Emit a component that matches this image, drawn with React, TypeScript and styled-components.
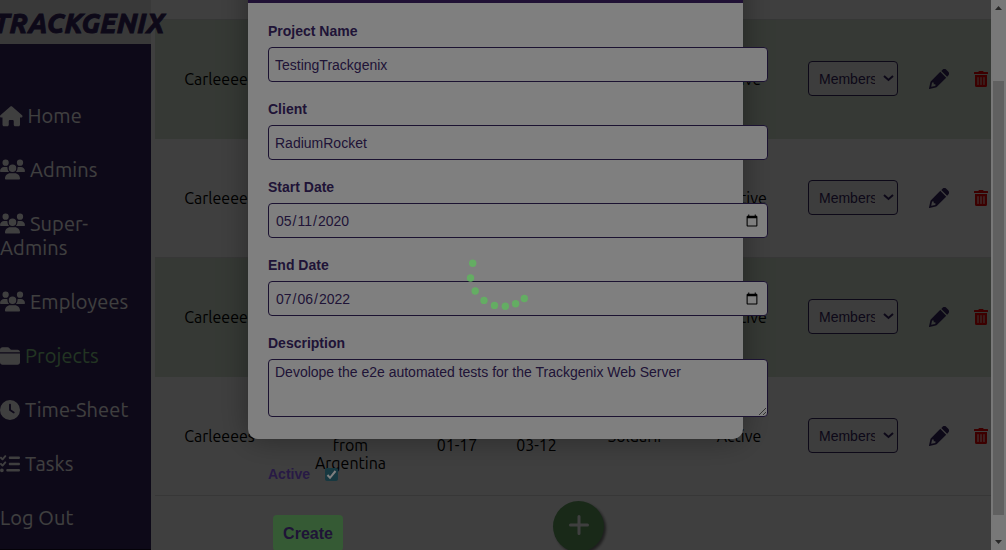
import React from 'react';
import styled, { createGlobalStyle } from 'styled-components';
import { FaTrashAlt } from 'react-icons/fa';
import { FaHouse, FaUsers, FaFolderClosed, FaClock, FaListCheck } from 'react-icons/fa6';

const Global = createGlobalStyle`
  * { box-sizing: border-box; }
  html, body { margin: 0; height: 550px; overflow: hidden; background: #fff; }
  body { font-family: Ubuntu, 'Noto Sans', sans-serif; }
`;

const Page = styled.div`
  position: relative;
  display: flex;
  width: 1006px;
  height: 550px;
  overflow: hidden;
`;
const Sidebar = styled.aside`
  width: 151px;
  height: 550px;
  flex: none;
  background: #372463;
  border-bottom: 1px solid #100820;
`;
const Brand = styled.div`
  height: 44px;
  background: #e4e4e6;
  color: #372463;
  font-size: 27.4px;
  font-weight: 800;
  font-style: italic;
  line-height: 45px;
  white-space: nowrap;
  text-indent: -7px;
  letter-spacing: -0.05px;
  -webkit-text-stroke: 0.8px #372463;
  position: relative;
  z-index: 1;
`;
const Nav = styled.nav`
  display: flex;
  flex-direction: column;
  gap: 30px;
  padding-top: 60px;
`;
const NavItem = styled.a<{ $active?: boolean }>`
  display: block;
  font-size: 20px;
  line-height: 24px;
  letter-spacing: 0.1px;
  color: ${(p) => (p.$active ? '#8bd58b' : '#fff')};
  svg {
    color: #fff;
    vertical-align: middle;
    margin: -7px 5px -3px 0;
  }
`;
const Main = styled.main`
  width: 840px;
  padding-left: 4px;
  height: 550px;
  overflow: hidden;
  background: #fff;
`;
const TableHead = styled.div`
  height: 20px;
  border-bottom: 1px solid #d8dcda;
`;
const Row = styled.div<{ $tinted?: boolean }>`
  display: grid;
  grid-template-columns: 129px 133px 80px 79px 117px 92px 114px 1fr 18px;
  align-items: center;
  height: 119px;
  border-bottom: 1px solid ${(p) => (p.$tinted ? '#d8e6d5' : '#dedede')};
  background: ${(p) => (p.$tinted ? '#d8e6d5' : '#fff')};
  color: #000;
  font-size: 16px;
  line-height: 18px;
  text-align: center;
`;
const Cell = styled.div`
  white-space: nowrap;
`;
const Members = styled.div`
  width: 90px;
  height: 35px;
  margin: 0 0 2px 23px;
  padding: 0 3px 0 10px;
  border: 1px solid #372463;
  border-radius: 4px;
  display: flex;
  align-items: center;
  justify-content: space-between;
  background: #f4f4f4;
  color: #372463;
  font: 14px 'Liberation Sans', sans-serif;
  span { width: 56px; padding-top: 1px; overflow: hidden; text-align: left; white-space: nowrap; }
`;
const IconCell = styled.div<{ $danger?: boolean }>`
  display: flex;
  justify-content: ${(p) => (p.$danger ? 'flex-start' : 'center')};
  padding-left: ${(p) => (p.$danger ? 0 : 6)}px;
  color: ${(p) => (p.$danger ? '#f00000' : '#372463')};
`;
const AddButton = styled.button`
  display: flex;
  align-items: center;
  justify-content: center;
  width: 51px;
  height: 51px;
  margin: 5px 0 0 398px;
  padding: 0 0 3px;
  border: 0;
  border-radius: 50%;
  background: #64a463;
  color: #fff;
  box-shadow: 2px 2px 3px #777;
`;
const ScrollBar = styled.div`
  position: relative;
  z-index: 3;
  width: 15px;
  height: 550px;
  display: flex;
  flex-direction: column;
  align-items: center;
  background: #f1f1f1;
`;
const ScrollArrow = styled.svg`
  flex: none;
  width: 15px;
  height: 15px;
`;
const Thumb = styled.div`
  width: 11px;
  height: 434px;
  margin-top: 66px;
  margin-bottom: auto;
  background: #c1c1c1;
`;
const Shade = styled.div<{ $level: number }>`
  position: absolute;
  inset: 0;
  z-index: ${(p) => p.$level};
  background: rgba(0, 0, 0, 0.5);
`;
const Modal = styled.section`
  position: absolute;
  z-index: 3;
  left: 248px;
  top: -60px;
  width: 495px;
  height: 499px;
  background: #fff;
  border-radius: 10px;
  box-shadow: 0 0 30px rgba(0, 0, 0, 0.35);
  font-family: 'Liberation Sans', sans-serif;
  color: #3f296e;
`;
const ModalBar = styled.div`
  height: 63px;
  background: #40226a;
  border-radius: 10px 10px 0 0;
`;
const Form = styled.form`
  padding: 20px 20px 0;
`;
const Field = styled.div`
  height: 78px;
`;
const Label = styled.label`
  display: block;
  height: 24px;
  font-size: 14px;
  line-height: 17px;
  font-weight: 700;
`;
const Input = styled.input`
  display: block;
  width: 500px;
  height: 35px;
  margin: 0;
  padding: 1px 6px 0;
  border: 1px solid #372463;
  border-radius: 4px;
  outline: 0;
  background: #fff;
  color: #3f296e;
  font: 14px 'Liberation Sans', sans-serif;
`;
const TextArea = styled.textarea`
  display: block;
  width: 500px;
  height: 58px;
  margin: 0;
  padding: 4px 6px;
  border: 1px solid #372463;
  border-radius: 4px;
  outline: 0;
  background: #fff;
  color: #3f296e;
  font: 14px/16px 'Liberation Sans', sans-serif;
`;
const ActiveRow = styled.div`
  display: flex;
  align-items: center;
  height: 20px;
  margin-top: 51px;
  font-size: 14px;
  font-weight: 700;
  color: #50358a;
  svg { margin-left: 15px; }
`;
const CreateButton = styled.button`
  display: block;
  width: 70px;
  height: 36px;
  margin: 31px 0 0 5px;
  padding: 2px 0 0;
  border: 0;
  border-radius: 4px;
  background: #6ab568;
  color: #3f296e;
  font: 700 16px 'Liberation Sans', sans-serif;
`;
const Spinner = styled.svg`
  position: absolute;
  z-index: 5;
  left: 460px;
  top: 250px;
`;

const Pencil = () => (
  <svg width="20" height="20" viewBox="0 0 20 20" fill="currentColor">
    <path d="M12.300 1.900l1-1a3 3 0 0 1 4.200 0l1.600 1.600a3 3 0 0 1 0 4.200l-1 1z" />
    <path fillRule="evenodd" d="M11.300 2.800l5.900 5.900-9.100 9.100a3 3 0 0 1-1.300.8L.5 20a.5.5 0 0 1-.5-.6l1.400-6.200a3 3 0 0 1 .8-1.300zM3.100 13.600l-.9 4.200 4.200-.9v-1.600H4.700v-1.700z" />
  </svg>
);

const rows = [
  { status: 'Active', tinted: true },
  { status: 'Inactive', tinted: false },
  { status: 'Inactive', tinted: true },
  { status: 'Active', tinted: false },
];

const dots = [[12.7, 13.2], [10.5, 28], [15.2, 41], [24, 50.4], [34.5, 55.4], [45.3, 56.3], [55.6, 53.8], [64.3, 48.5]];

export default function App() {
  return (
    <>
      <Global />
      <Page>
        <Sidebar>
          <Brand>TRACKGENIX</Brand>
          <Nav>
            <NavItem><FaHouse size={22.5} />Home</NavItem>
            <NavItem><FaUsers size={25} />Admins</NavItem>
            <NavItem><FaUsers size={25} />Super-<br />Admins</NavItem>
            <NavItem><FaUsers size={25} />Employees</NavItem>
            <NavItem $active><FaFolderClosed size={20} />Projects</NavItem>
            <NavItem><FaClock size={20} />Time-Sheet</NavItem>
            <NavItem><FaListCheck size={20} />Tasks</NavItem>
            <NavItem>Log Out</NavItem>
          </Nav>
        </Sidebar>
        <Main>
          <TableHead />
          {rows.map((row, i) => (
            <Row key={i} $tinted={row.tinted}>
              <Cell>Carleeees</Cell>
              <Cell>Project<br />made<br />from<br />Argentina</Cell>
              <Cell>2022-<br />01-17</Cell>
              <Cell>2023-<br />03-12</Cell>
              <Cell>Soldarii</Cell>
              <Cell>{row.status}</Cell>
              <Members>
                <span>Members</span>
                <svg width="11" height="7" viewBox="0 0 11 7"><path d="M1 1l4.500 4L10 1" fill="none" stroke="#372463" strokeWidth="2" /></svg>
              </Members>
              <IconCell><Pencil /></IconCell>
              <IconCell $danger><FaTrashAlt size={16} /></IconCell>
            </Row>
          ))}
          <AddButton>
            <svg width="20" height="20" viewBox="0 0 20 20">
              <path d="M10 1.500v17M1.500 10h17" stroke="currentColor" strokeWidth="3" strokeLinecap="round" />
            </svg>
          </AddButton>
        </Main>
        <Shade $level={2} />
        <ScrollBar>
          <ScrollArrow viewBox="0 0 15 15"><path d="M4 10l3.500-4L11 10z" fill="#505050" /></ScrollArrow>
          <Thumb />
          <ScrollArrow viewBox="0 0 15 15"><path d="M4 5l3.500 4L11 5z" fill="#505050" /></ScrollArrow>
        </ScrollBar>
        <Modal>
          <ModalBar />
          <Form>
            <Field><Label>Project Name</Label><Input defaultValue="TestingTrackgenix" /></Field>
            <Field><Label>Client</Label><Input defaultValue="RadiumRocket" /></Field>
            <Field><Label>Start Date</Label><Input type="date" defaultValue="2020-05-11" /></Field>
            <Field><Label>End Date</Label><Input type="date" defaultValue="2022-07-06" /></Field>
            <Field>
              <Label>Description</Label>
              <TextArea spellCheck={false} defaultValue="Devolope the e2e automated tests for the Trackgenix Web Server" />
            </Field>
            <ActiveRow>
              Active
              <svg width="13" height="13" viewBox="0 0 13 13">
                <rect width="13" height="13" rx="2" fill="#2f7080" />
                <path d="M2.500 7l2.500 2.800L10.500 3" fill="none" stroke="#fff" strokeWidth="2" />
              </svg>
            </ActiveRow>
            <CreateButton type="button">Create</CreateButton>
          </Form>
        </Modal>
        <Shade $level={4} />
        <Spinner width="80" height="70" viewBox="0 0 80 70">
          {dots.map(([x, y]) => <circle key={x} cx={x} cy={y} r="3.700" fill="#64ad63" />)}
        </Spinner>
      </Page>
    </>
  );
}
